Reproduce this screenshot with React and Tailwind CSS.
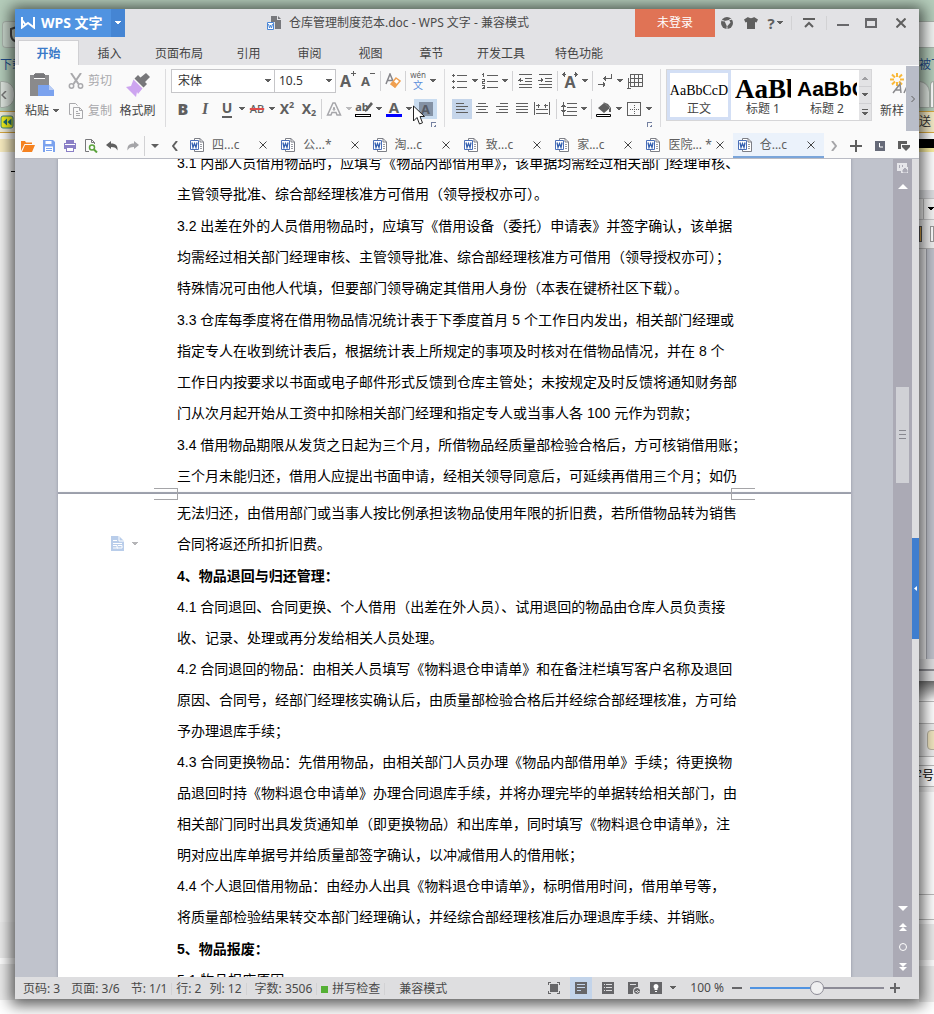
import { useState } from 'react';

const SHADOW = 'shadow-[0_2px_14px_4px_rgba(0,0,0,0.65)]';

// 文档选项卡
const docTabs = [
  { id: 1, title: '四...c' },
  { id: 2, title: '公...*' },
  { id: 3, title: '淘...c' },
  { id: 4, title: '致...c' },
  { id: 5, title: '家...c' },
  { id: 6, title: '医院... *' },
  { id: 7, title: '仓...c' },
];

const menus = ['开始', '插入', '页面布局', '引用', '审阅', '视图', '章节', '开发工具', '特色功能'];

// 正文内容，每一项为一段，段内按行排列
const pageOne = [
  [
    '3.1 内部人员借用物品时，应填写《物品内部借用单》，该单据均需经过相关部门经理审核、',
    '主管领导批准、综合部经理核准方可借用（领导授权亦可）。',
  ],
  [
    '3.2 出差在外的人员借用物品时，应填写《借用设备（委托）申请表》并签字确认，该单据',
    '均需经过相关部门经理审核、主管领导批准、综合部经理核准方可借用（领导授权亦可）；',
    '特殊情况可由他人代填，但要部门领导确定其借用人身份（本表在键桥社区下载）。',
  ],
  [
    '3.3 仓库每季度将在借用物品情况统计表于下季度首月 5 个工作日内发出，相关部门经理或',
    '指定专人在收到统计表后，根据统计表上所规定的事项及时核对在借物品情况，并在 8 个',
    '工作日内按要求以书面或电子邮件形式反馈到仓库主管处；未按规定及时反馈将通知财务部',
    '门从次月起开始从工资中扣除相关部门经理和指定专人或当事人各 100 元作为罚款；',
  ],
  [
    '3.4 借用物品期限从发货之日起为三个月，所借物品经质量部检验合格后，方可核销借用账；',
    '三个月未能归还，借用人应提出书面申请，经相关领导同意后，可延续再借用三个月；如仍',
  ],
];

const pageTwo = [
  {
    paragraphs: [
      [
        '无法归还，由借用部门或当事人按比例承担该物品使用年限的折旧费，若所借物品转为销售',
        '合同将返还所扣折旧费。',
      ],
    ],
  },
  {
    heading: '4、物品退回与归还管理：',
    paragraphs: [
      [
        '4.1 合同退回、合同更换、个人借用（出差在外人员）、试用退回的物品由仓库人员负责接',
        '收、记录、处理或再分发给相关人员处理。',
      ],
      [
        '4.2 合同退回的物品：由相关人员填写《物料退仓申请单》和在备注栏填写客户名称及退回',
        '原因、合同号，经部门经理核实确认后，由质量部检验合格后并经综合部经理核准，方可给',
        '予办理退库手续；',
      ],
      [
        '4.3 合同更换物品：先借用物品，由相关部门人员办理《物品内部借用单》手续；待更换物',
        '品退回时持《物料退仓申请单》办理合同退库手续，并将办理完毕的单据转给相关部门，由',
        '相关部门同时出具发货通知单（即更换物品）和出库单，同时填写《物料退仓申请单》，注',
        '明对应出库单据号并给质量部签字确认，以冲减借用人的借用帐；',
      ],
      [
        '4.4 个人退回借用物品：由经办人出具《物料退仓申请单》，标明借用时间，借用单号等，',
        '将质量部检验结果转交本部门经理确认，并经综合部经理核准后办理退库手续、并销账。',
      ],
    ],
  },
  {
    heading: '5、物品报废：',
    paragraphs: [['5.1 物品报废原因']],
  },
];

function Caret({ className = 'text-[#5f5f5f]' }) {
  return (
    <svg className={`w-1.5 h-1 shrink-0 ${className}`} viewBox="0 0 6 4" fill="currentColor" shapeRendering="crispEdges">
      <path d="M0 0h6v1H5v1H4v1H2V2H1V1H0z" />
    </svg>
  );
}

function Sep({ className = 'h-5' }) {
  return <span className={`w-px shrink-0 bg-[#d2d2d4] ${className}`} />;
}

// 功能区小图标按钮
function Tool({ label, className = 'w-4', children }) {
  return (
    <button type="button" aria-label={label} className={`h-5 shrink-0 flex items-center justify-center text-[#5f5f5f] ${className}`}>
      {children}
    </button>
  );
}

function Lines({ d }) {
  return (
    <svg className="w-4 h-4 shrink-0" viewBox="0 0 16 16" fill="none" stroke="currentColor" shapeRendering="crispEdges">
      <path d={d} />
    </svg>
  );
}

function DocIcon() {
  return (
    <svg className="w-3.5 h-3.5 shrink-0" viewBox="0 0 14 14" fill="none">
      <path d="M4.5 2V.5H10L13.500 4v9.500h-9V12" stroke="#7d7f86" fill="#fff" />
      <path d="M10 .5V4h3.500" stroke="#7d7f86" />
      <path d="M10 6.500h2M10 8.500h2M10 10.500h2" stroke="#9a9ca3" />
      <path d="M.5 2.500h8v9h-8z" fill="#fff" stroke="#4a6fb8" />
      <path d="M2 4.500l1 5 1.500-4 1.500 4 1-5" stroke="#3460b0" strokeWidth="1.300" />
    </svg>
  );
}

function LeftBackdrop() {
  return (
    <div className="overflow-hidden flex flex-col whitespace-nowrap text-xs" aria-hidden="true">
      <div className="h-[21px]" />
      <div className="h-[27px] ml-0.5 border border-r-0 border-[#a9b3ab] rounded-l-sm bg-[#c9d6cc] flex items-center pl-1.5">
        <svg className="w-5 h-5 shrink-0" viewBox="0 0 20 20" fill="none" stroke="#444" strokeWidth="2">
          <path d="M2 4l6-2 6 2v6c0 4-3 6-6 7-3-1-6-3-6-7z" />
        </svg>
      </div>
      <div className="h-[33px] flex items-center text-[#1f4e8c]">下载</div>
      <div className="h-[27px] border border-[#a9b3ab] rounded-r-xl bg-[#dfe6e0] flex items-center">
        <svg className="w-1.5 h-2" viewBox="0 0 6 8" fill="none" stroke="#777" strokeWidth="1.500"><path d="M5 0L1 4l4 4" /></svg>
      </div>
      <div className="h-[3px]" />
      <div className="h-[22px] border-y border-[#d9a93f] bg-[#f3f0dd] flex items-center">
        <svg className="w-3.5 h-3.5 shrink-0" viewBox="0 0 14 14">
          <rect x="1" y="1" width="12" height="12" rx="2" fill="#f4f31e" stroke="#3a8a8a" />
          <path d="M7 3.500v7L3 7zM11.500 3.500v7L7.500 7z" fill="#1c6e74" />
        </svg>
      </div>
      <div className="h-1.5 bg-white" />
      <div className="h-[13px] bg-[#fbefc3]" />
      <div className="h-[38px] bg-white flex items-center justify-end"><span className="w-1 h-px bg-black" /></div>
      <div className="h-[732px] bg-[#f1f1f1]" />
      <div className="h-9 bg-[#ececec]" />
      <div className="h-1.5 bg-white" />
      <div className="h-9 bg-[#ececec]" />
      <div className="flex-1 bg-white" />
    </div>
  );
}

function RightBackdrop() {
  return (
    <div className="overflow-hidden flex flex-col whitespace-nowrap text-xs" aria-hidden="true">
      <div className="h-[21px]" />
      <div className="h-[27px] border-y border-[#a9b3ab] bg-[#f2f5f3]" />
      <div className="h-[33px] flex items-center text-[#1f4e8c]">被下</div>
      <div className="h-[27px] flex">
        <span className="flex-1 rounded-tr-xl border border-[#a9b3ab] bg-[#dfe6e0]" />
        <span className="w-1 rounded-tl-xl border border-[#a9b3ab] bg-white" />
      </div>
      <div className="h-[3px]" />
      <div className="h-[22px] border-y border-[#d9a93f] bg-[#f6ecc8] flex items-center text-[#333]">送</div>
      <div className="h-1.5 bg-white" />
      <div className="h-[9px] bg-black" />
      <div className="h-1 bg-[#fbefa0]" />
      <div className="h-[38px] bg-white" />
      <div className="h-2 bg-[#dedfe2]" />
      <div className="h-[22px] border-y border-[#c9c9cb] bg-[#f6f6f6] flex items-center justify-end">
        <span className="h-full border-l border-[#bbb] pl-1 flex items-center"><Caret className="text-black" /></span>
      </div>
      <div className="h-[29px] bg-[#f1f1f1] border-b border-[#bbb] flex items-center gap-2">
        <span className="w-1 h-4 bg-[#e0a848] border border-[#555]" />
        <span className="w-2 h-4 bg-white border border-[#999]" />
      </div>
      <div className="h-[410px] flex">
        <span className="w-2 bg-[#e9e9eb] border-r border-[#9fa2aa]" />
        <span className="flex-1 bg-[#c0c3cc]" />
      </div>
      <div className="h-3 bg-[#dedee0] border-b-2 border-[#8b8b91]" />
      <div className="h-2.5 bg-[#dedee0]" />
      <div className="h-5 bg-linear-to-b from-[#6d6d6d] to-white" />
      <div className="h-[23px] bg-white border-y border-[#bbb]" />
      <div className="h-8 bg-[#eeeeee] flex items-center pl-2"><span className="w-4 h-5 shrink-0 rounded-sm border border-[#b8b3a2] bg-[#f1e6c0]" /></div>
      <div className="h-2.5 bg-white border-y border-[#bbb]" />
      <div className="h-5 bg-white flex items-center justify-end text-black">字号</div>
      <div className="h-1.5 bg-[#eee] border-t border-[#bbb]" />
      <div className="h-[102px] bg-white" />
      <div className="h-[26px] bg-white border-y border-[#bbb]" />
      <div className="h-1 bg-white" />
      <div className="h-9 bg-[#ececec]" />
      <div className="h-1.5 bg-white" />
      <div className="h-9 bg-[#ececec]" />
      <div className="flex-1 bg-white" />
    </div>
  );
}

function TitleBar() {
  return (
    <div className="h-7 flex shrink-0">
      <button type="button" className="w-24 bg-[#5093e1] text-white flex items-center gap-1.5 pl-1.5 text-sm font-bold">
        <svg className="w-3.5 h-3 shrink-0" viewBox="0 0 14 12" fill="none" stroke="#fff" strokeWidth="2">
          <path d="M1 0v10.500L7 6l6 4.500V0M1 3l3 4M13 3" />
        </svg>
        <span className="whitespace-nowrap">WPS 文字</span>
      </button>
      <button type="button" aria-label="应用菜单" className="w-3.5 bg-[#4585d3] text-white flex items-center justify-center">
        <Caret className="text-white" />
      </button>
      <div className="flex-1 flex items-center justify-center gap-2 pl-9 text-[#4a4a4a]">
        <svg className="w-3.5 h-3.5 shrink-0" viewBox="0 0 14 14" fill="none">
          <path d="M4 0h6v4h4v9H8V6H4z" fill="#77787c" />
          <path d="M11 0l3 3h-3z" fill="#77787c" />
          <path d="M.5 6.500h6v7h-6z" fill="#fff" stroke="#4a86d6" />
          <path d="M1.500 8l1 4 1-3 1 3 1-4" stroke="#4a86d6" />
        </svg>
        <h1 className="whitespace-nowrap">仓库管理制度范本.doc - WPS 文字 - 兼容模式</h1>
      </div>
      <button type="button" className="w-20 bg-[#e07355] text-white">未登录</button>
      <div className="flex items-center text-[#68686b]">
        <Tool label="云同步" className="w-6">
          <svg className="w-3 h-3" viewBox="0 0 12 12">
            <circle cx="6" cy="6" r="6" fill="currentColor" />
            <path d="M3.500 4L8 3l1.500 2.500L6 9.500z" fill="#e2e2e5" />
            <path d="M8 3l3-1M3.500 4L.5 3.500M6 9.500V12" stroke="#e2e2e5" />
          </svg>
        </Tool>
        <Tool label="皮肤" className="w-6">
          <svg className="w-3.5 h-3" viewBox="0 0 14 12" fill="currentColor">
            <path d="M4 0c1 1.500 5 1.500 6 0l4 2.500-1.500 3L11 5v7H3V5l-1.500.5L0 2.500z" />
          </svg>
        </Tool>
        <Tool label="帮助" className="w-6">
          <span className="text-[15px] font-bold pr-0.5">?</span>
          <Caret />
        </Tool>
        <Sep className="h-3.5 ml-1 bg-[#a5a5a8]" />
        <Tool label="隐藏功能区" className="w-[34px]">
          <svg className="w-3 h-2.5" viewBox="0 0 12 10" fill="none" stroke="currentColor" strokeWidth="2">
            <path d="M0 1h12M2 9l4-4 4 4" />
          </svg>
        </Tool>
        <Sep className="h-3.5 bg-[#a5a5a8]" />
        <Tool label="最小化" className="w-8"><span className="w-3 h-0.5 mt-1 bg-[#68686b]" /></Tool>
        <Tool label="最大化" className="w-6"><span className="w-3 h-2.5 border-2 border-t-3 border-[#68686b]" /></Tool>
        <Tool label="关闭" className="w-9">
          <svg className="w-2.5 h-2.5" viewBox="0 0 10 10" fill="none" stroke="currentColor" strokeWidth="2">
            <path d="M.5.5l9 9M9.500.5l-9 9" />
          </svg>
        </Tool>
      </div>
    </div>
  );
}

function MenuBar({ active, onSelect }) {
  return (
    <nav className="h-7 flex items-end pl-[3px] shrink-0">
      {menus.map((name) => (
        <button
          key={name}
          type="button"
          onClick={() => onSelect(name)}
          className={`h-[25px] pt-0.5 whitespace-nowrap ${name.length > 2 ? 'w-[78px]' : 'w-[61px]'} ${
            name === active ? 'bg-[#fafafa] border border-b-0 border-[#d0d0d3] text-[#3c7bc8] font-bold' : 'text-[#444]'
          }`}
        >
          {name}
        </button>
      ))}
    </nav>
  );
}

function Launcher() {
  return (
    <button type="button" aria-label="更多设置" className="absolute right-2 bottom-0 flex text-[#7480a0]">
      <svg className="w-[5px] h-[5px]" viewBox="0 0 5 5" fill="none" stroke="currentColor" shapeRendering="crispEdges">
        <path d="M.5 5V.5H5M3 4.500h1.500V3" />
      </svg>
    </button>
  );
}

function ClipboardGroup() {
  return (
    <div className="w-[151px] shrink-0 flex border-r border-[#dcdcde] my-1 mb-1.5 text-[#444]">
      <button type="button" className="w-[50px] pl-1 flex flex-col items-center justify-between pt-1 pb-2">
        <svg className="w-6 h-6" viewBox="0 0 24 24">
          <path d="M0 2h5V0h9v2h5v10H8v11H0z" fill="#8a8a8c" />
          <path d="M4 3h11v3H4z" fill="#fafafa" />
          <path d="M4 1h11v4H4z" fill="#77777a" />
          <path d="M8 12h11l5 5v6H8z" fill="#7ba2ee" />
          <path d="M19 12v5h5z" fill="#b9cdf6" />
        </svg>
        <span className="flex items-center gap-1 whitespace-nowrap leading-4">粘贴<Caret /></span>
      </button>
      <div className="flex flex-col justify-between pl-[3px] pt-1 pb-2 text-[#a9a9ac]">
        <button type="button" className="flex items-center gap-1 h-4 whitespace-nowrap">
          <svg className="w-4 h-4" viewBox="0 0 16 16" fill="none" stroke="currentColor" strokeWidth="1.500">
            <path d="M3 0l7.500 11M13 0L5.500 11" strokeWidth="2" />
            <circle cx="3.500" cy="13" r="2.200" />
            <circle cx="12.500" cy="13" r="2.200" />
          </svg>
          剪切
        </button>
        <button type="button" className="flex items-center gap-1 h-4 whitespace-nowrap">
          <svg className="w-4 h-4" viewBox="0 0 16 16" fill="none" stroke="currentColor">
            <path d="M3.500 11.500h-2v-11h6l2 2" />
            <path d="M5.500 4.500h6l3 3v8h-9zM11.500 4.500v3h3M8 8.500h2M8 10.500h4M8 12.500h4" />
          </svg>
          复制
        </button>
      </div>
      <button type="button" className="flex-1 flex flex-col items-center justify-between pt-1 pb-2 pr-0.5">
        <svg className="w-6 h-6" viewBox="0 0 24 24">
          <path d="M20 0l4 4-5 5 2 2-3.500 3.500-9-9L12 2l2.500 2.500z" fill="#77777a" />
          <path d="M7.500 6.500l9 9L12 21l-1-2-1 5L0 14l5-1z" fill="#cda5f0" />
        </svg>
        <span className="whitespace-nowrap leading-4">格式刷</span>
      </button>
    </div>
  );
}

function FontGroup() {
  return (
    <div className="relative w-[279px] shrink-0 border-r border-[#dcdcde] mt-1 mb-1.5 pl-[5px] flex flex-col gap-1.5">
      <div className="flex items-center gap-1 h-6">
        <div className="flex h-full">
          <div className="relative flex items-center">
            <select aria-label="字体" defaultValue="宋体" className="appearance-none w-[104px] h-6 border border-[#c6c6c9] bg-white pl-1.5 text-[#333]">
              <option>宋体</option>
              <option>黑体</option>
            </select>
            <span className="absolute right-1 pointer-events-none"><Caret /></span>
          </div>
          <div className="relative flex items-center">
            <select aria-label="字号" defaultValue="10.5" className="appearance-none w-[61px] h-6 border border-l-0 border-[#c6c6c9] bg-white pl-1 text-[#333]">
              <option>10.5</option>
              <option>12</option>
            </select>
            <span className="absolute right-1 pointer-events-none"><Caret /></span>
          </div>
        </div>
        <Tool label="增大字号">
          <b className="text-base leading-5">A</b>
          <svg className="w-[5px] h-[5px] shrink-0 self-start" viewBox="0 0 5 5" stroke="currentColor" shapeRendering="crispEdges"><path d="M2.500 0v5M0 2.500h5" /></svg>
        </Tool>
        <Tool label="减小字号">
          <b className="text-[13px] leading-5">A</b>
          <svg className="w-[5px] h-[5px] shrink-0 self-start" viewBox="0 0 5 5" stroke="currentColor" shapeRendering="crispEdges"><path d="M0 2.500h5" /></svg>
        </Tool>
        <Sep />
        <Tool label="清除格式">
          <svg className="w-4 h-4" viewBox="0 0 16 16" fill="none">
            <path d="M1 11L5 1l3 7M2.500 7.500H7" stroke="#85858a" strokeWidth="1.500" />
            <path d="M11 5l4 3-5 6-4-3z" fill="#fff" stroke="#f0a050" strokeWidth="1.500" />
            <path d="M8.500 8l4 3.500L10 15l-4-4z" fill="#f0a050" />
          </svg>
        </Tool>
        <Sep />
        <Tool label="拼音指南">
          <span className="flex flex-col items-center">
            <span className="text-[8px] leading-2">wén</span>
            <span className="text-[10px] leading-3 text-[#5a8fdc]">文</span>
          </span>
        </Tool>
        <Caret />
      </div>
      <div className="flex items-center gap-0.5 h-5 pl-0.5">
        <Tool label="加粗" className="w-5"><b className="text-base font-black">B</b></Tool>
        <Tool label="倾斜" className="w-5"><i className="text-base font-bold font-['Liberation_Serif',serif]">I</i></Tool>
        <Tool label="下划线" className="w-5"><span className="text-sm leading-4 font-bold border-b-2">U</span></Tool>
        <Caret />
        <Tool label="删除线" className="w-5"><span className="text-[11px] font-medium line-through decoration-[#e04b4b] decoration-2">AB</span></Tool>
        <Caret />
        <Tool label="上标" className="w-5"><b className="text-sm">X</b><b className="text-[9px] leading-3 self-start">2</b></Tool>
        <Tool label="下标" className="w-5"><b className="text-sm">X</b><b className="text-[9px] leading-3 self-end">2</b></Tool>
        <Sep className="h-5" />
        <Tool label="文字效果" className="w-5">
          <svg className="w-4 h-4" viewBox="0 0 16 16" fill="none">
            <path d="M1.500 14L7 2h2l5.500 12h-3.500l-1-2.500H6L5 14z" stroke="#a6a6aa" strokeWidth="1.500" />
            <path d="M7 9l1-3 1 3z" stroke="#a6a6aa" />
          </svg>
        </Tool>
        <Caret className="text-[#bbbbbd]" />
        <Tool label="突出显示" className="w-5">
          <span className="flex flex-col">
            <span className="flex h-3 items-center">
              <b className="text-[11px] leading-3">ab</b>
              <svg className="w-2 h-3 -ml-1" viewBox="0 0 8 12" fill="currentColor"><path d="M6 1l2 2-6 7-2 1 .5-3z" /></svg>
            </span>
            <span className="w-4 h-[3px] mt-px border border-black bg-white" />
          </span>
        </Tool>
        <Caret />
        <Tool label="字体颜色" className="w-5">
          <span className="flex flex-col items-center"><b className="text-[15px] leading-3">A</b><span className="w-4 h-[3px] mt-px bg-[#0000ff]" /></span>
        </Tool>
        <Caret />
        <Tool label="字符底纹" className="w-[23px] bg-[#c9dcf0]"><b className="w-3.5 h-3.5 text-[13px] leading-3.5 bg-[#8492a5] text-[#565b66]">A</b></Tool>
      </div>
      <Launcher />
      {/* 鼠标指针 */}
      <svg className="absolute left-[247px] top-[36px] w-3 h-5 pointer-events-none" viewBox="0 0 12 20">
        <path d="M.5 1v15l3.500-3.500L6.500 19l3-1.200L7 11.500h4.500z" fill="#fff" stroke="#222" />
      </svg>
    </div>
  );
}

function ParagraphGroup() {
  return (
    <div className="relative w-[216px] shrink-0 border-r border-[#dcdcde] mt-1 mb-1.5 pl-[7px] flex flex-col gap-1.5">
      <div className="flex items-center gap-1 h-6">
        <Tool label="项目符号"><Lines d="M5 2.500h10M5 8.500h10M5 14.500h10M0 2.500h3M0 8.500h3M0 14.500h3M1.500 1v3M1.500 7v3M1.500 13v3" /></Tool>
        <Caret />
        <Tool label="编号"><Lines d="M5 2.500h11M5 8.500h11M5 14.500h11M1.500 0v4M0 1.500h1M0 6.500h2.500v2H.5v1.500h2M0 12.500h2.500v3H0M1 14h1" /></Tool>
        <Caret />
        <Sep />
        <Tool label="减少缩进"><Lines d="M2 1.500h13M8 5.500h7M8 8.500h7M2 11.500h13M2 14.500h13M1 7h5M3.500 5v4M2.500 6v2" /></Tool>
        <Tool label="增加缩进"><Lines d="M2 1.500h13M8 5.500h7M8 8.500h7M2 11.500h13M2 14.500h13M1 7h5M4.500 5v4M5.500 6v2" /></Tool>
        <Sep />
        <Tool label="字符缩放">
          <span className="relative flex justify-center w-4">
            <b className="text-base leading-4 pt-0.5">A</b>
            <svg className="absolute inset-x-0 top-0 w-4 h-1.5" viewBox="0 0 16 6" fill="none" stroke="currentColor" shapeRendering="crispEdges">
              <path d="M0 2.500h4M12 2.500h4M1.500 1v3M2.500 0v5M14.500 1v3M13.500 0v5" />
            </svg>
          </span>
        </Tool>
        <Caret />
        <Sep />
        <Tool label="换行标记">
          <Lines d="M14.500 1v4H6M8.500 2.500v5M7.500 3.500v3M1 11.500h7M6.500 9v5M7.500 10v3" />
        </Tool>
        <Caret />
        <Tool label="插入表格"><Lines d="M3.500 1.500h12v12h-12zM7.500 1v13M11.500 1v13M3 5.500h13M3 9.500h13M1.500 5v10.500M1 9.500h3M0 15.500h4" /></Tool>
      </div>
      <div className="flex items-center h-5">
        <div className="flex">
          <Tool label="左对齐" className="w-5 bg-[#c5d5ea]"><Lines d="M2 2.500h8M2 5.500h12M2 8.500h9M2 11.500h12" /></Tool>
          <Tool label="居中" className="w-5"><Lines d="M4 2.500h8M2 5.500h12M4 8.500h8M2 11.500h12" /></Tool>
          <Tool label="右对齐" className="w-5"><Lines d="M6 2.500h8M2 5.500h12M5 8.500h9M2 11.500h12" /></Tool>
          <Tool label="两端对齐" className="w-5"><Lines d="M2 2.500h12M2 5.500h12M2 8.500h12M2 11.500h12" /></Tool>
          <Tool label="分散对齐" className="w-5"><Lines d="M.5 1v13M15.500 1v13M2 4.500h4M10 4.500h4M4.500 2.500v4M11.500 2.500v4M2 8.500h12M2 12.500h12" /></Tool>
        </div>
        <div className="flex items-center gap-1 pl-1">
          <Sep />
          <Tool label="行距"><Lines d="M6 2.500h10M6 6.500h10M6 10.500h10M2 14.500h14M2.500 2v12M1 4.500h3M1 10.500h3M2 1.500h1M0 5.500h5M0 9.500h5" /></Tool>
          <Caret />
          <Sep />
          <Tool label="底纹颜色">
            <svg className="w-4 h-4" viewBox="0 0 16 16">
              <path d="M7 1l6 5v5h2V7l-3-4zM2 7l6-5 6 5-6 5z" fill="currentColor" />
              <path d="M.5 13.500h14v2H.5z" fill="#fff" stroke="#000" />
            </svg>
          </Tool>
          <Caret />
          <Tool label="边框">
            <svg className="w-4 h-4" viewBox="0 0 16 16" fill="none" stroke="currentColor" shapeRendering="crispEdges">
              <path d="M1.500 1.500h13v13h-13z" />
              <path d="M8 4v9M4 8.500h9" strokeDasharray="1 1" />
            </svg>
          </Tool>
          <Caret />
        </div>
      </div>
      <Launcher />
    </div>
  );
}

function StyleGallery() {
  return (
    <div className="flex-1 min-w-0 flex mt-1 overflow-hidden">
      <div className="ml-[5px] h-[52px] shrink-0 flex border border-[#d6d6d8] bg-white">
        <button type="button" className="w-16 border-3 border-[#d3dff5] flex flex-col items-center">
          <span className="h-7 flex items-end leading-5 text-sm text-black font-['Liberation_Serif',serif]">AaBbCcD</span>
          <span className="leading-4 text-[#444]">正文</span>
        </button>
        <button type="button" className="w-16 pt-[3px] px-1 flex flex-col items-center">
          <span className="h-7 w-full leading-8 overflow-hidden text-left text-[27px] font-bold text-black font-['Liberation_Serif',serif]">AaBb</span>
          <span className="leading-4 text-[#444]">标题 1</span>
        </button>
        <button type="button" className="w-16 pt-[3px] px-0.5 flex flex-col items-center">
          <span className="h-7 w-full leading-8 overflow-hidden text-left text-[21px] font-bold text-black font-['Liberation_Sans',sans-serif]">AaBbC</span>
          <span className="leading-4 text-[#444]">标题 2</span>
        </button>
        <div className="w-3 bg-[#d0d0d3] flex flex-col gap-px">
          <button type="button" aria-label="上一行" className="flex-1 flex items-center justify-center bg-[#e3e3e5]"><span className="rotate-180 flex"><Caret className="text-[#a0a0a3]" /></span></button>
          <button type="button" aria-label="下一行" className="flex-1 flex items-center justify-center bg-[#e3e3e5]"><Caret /></button>
          <button type="button" aria-label="全部样式" className="flex-1 flex flex-col gap-0.5 items-center justify-center bg-[#e3e3e5]"><span className="w-1.5 h-px bg-[#5f5f5f]" /><Caret /></button>
        </div>
      </div>
      <button type="button" className="h-[52px] shrink-0 ml-2 flex flex-col items-start justify-between pt-1 pb-0.5 text-[#444]">
        <svg className="w-6 h-6 ml-2.5" viewBox="0 0 24 24" fill="none">
          <path d="M7 0v4M7 9v4M0 6.500h4M10 6.500h4M2 1.500l3 3M9 8.500l3 3M12 1.500l-3 3M5 8.500l-3 3" stroke="#f9b93a" strokeWidth="2" />
          <path d="M3 20l7-9 1 9M6 17h5M14 20l4-9M17 12l5 0" stroke="#8a8a8d" strokeWidth="1.500" />
        </svg>
        <span className="whitespace-nowrap leading-4">新样</span>
      </button>
    </div>
  );
}

function QuickBar({ active, onSelect }) {
  return (
    <div className="h-[26px] shrink-0 flex items-center border-b border-[#b9bbc4] pl-[3px] text-[#5f5f5f]">
      <div className="flex items-center gap-px shrink-0">
        <Tool label="打开" className="w-5">
          <svg className="w-3.5 h-3" viewBox="0 0 14 12" fill="#f58220"><path d="M0 11V1h4l1 1.500h6V4H3.500zM4 5h10l-3 7H1z" /></svg>
        </Tool>
        <Tool label="保存" className="w-5">
          <svg className="w-3 h-3" viewBox="0 0 12 12"><path d="M0 0h10l2 2v10H0z" fill="#7ba2ee" /><path d="M2.500 1h6v3h-6zM2 6.500h8V12H2z" fill="#fff" /><path d="M3 8h6v1H3zM3 10h6v1H3z" fill="#7ba2ee" /></svg>
        </Tool>
        <Tool label="打印" className="w-5">
          <svg className="w-3 h-3" viewBox="0 0 12 12"><path d="M2 0h8v3h2v6h-2v3H2V9H0V3h2z" fill="#8a7fc6" /><path d="M1 4h10v1H1zM3 8h6v3H3z" fill="#fff" /></svg>
        </Tool>
        <Tool label="打印预览" className="w-5">
          <svg className="w-3.5 h-3.5" viewBox="0 0 14 14" fill="none"><path d="M5 12.500H1.500v-12h6l3 3V5M7.500.5v3h3" stroke="#77777a" /><circle cx="8" cy="8.500" r="2.500" stroke="#5ba33c" strokeWidth="1.500" /><path d="M10 10.500l3 3" stroke="#5ba33c" strokeWidth="2" /></svg>
        </Tool>
        <Tool label="撤销" className="w-5">
          <svg className="w-3 h-2.5" viewBox="0 0 12 10" fill="currentColor"><path d="M0 4l5-4v2.500c5 0 7 2.500 6.500 7C10.500 7 8.500 6 5 6v2z" /></svg>
        </Tool>
        <Tool label="恢复" className="w-5">
          <svg className="w-3 h-2.5" viewBox="0 0 12 10" fill="#a5a5a8"><path d="M12 4L7 0v2.500C2 2.500 0 5 .5 9.500 1.500 7 3.500 6 7 6v2z" /></svg>
        </Tool>
        <Sep />
        <Tool label="自定义快速访问" className="w-[18px]">
          <svg className="w-2 h-1" viewBox="0 0 8 4" fill="currentColor"><path d="M0 0h8L4 4z" /></svg>
        </Tool>
        <Tool label="向左滚动" className="w-5">
          <svg className="w-1.5 h-2.5" viewBox="0 0 6 10" fill="none" stroke="currentColor" strokeWidth="2"><path d="M5 0L1 5l4 5" /></svg>
        </Tool>
      </div>
      <div className="flex-1 min-w-0 flex h-full">
        {docTabs.map((tab) => (
          <div
            key={tab.id}
            className={`flex-1 min-w-0 flex items-center pl-[5px] pr-[9px] border-b-2 ${
              tab.id === active ? 'bg-[#ebf2fb] border-[#7aa5da]' : 'border-transparent'
            }`}
          >
            <button type="button" onClick={() => onSelect(tab.id)} className="flex-1 min-w-0 flex items-center gap-2 whitespace-nowrap">
              <DocIcon />
              {tab.title}
            </button>
            <button type="button" aria-label={`关闭 ${tab.title}`} className="shrink-0">
              <svg className="w-2 h-2" viewBox="0 0 8 8" fill="none" stroke="#444"><path d="M.5.5l7 7M7.500.5l-7 7" /></svg>
            </button>
          </div>
        ))}
      </div>
      <div className="w-[95px] shrink-0 flex items-center">
        <Tool label="向右滚动" className="w-5">
          <svg className="w-1.5 h-2.5" viewBox="0 0 6 10" fill="none" stroke="#a5a5a8" strokeWidth="2"><path d="M1 0l4 5-4 5" /></svg>
        </Tool>
        <Tool label="新建标签" className="w-6">
          <svg className="w-3 h-3" viewBox="0 0 12 12" fill="none" stroke="currentColor" strokeWidth="2"><path d="M6 0v12M0 6h12" /></svg>
        </Tool>
        <Tool label="历史" className="w-6">
          <svg className="w-2.5 h-2.5" viewBox="0 0 10 10"><path d="M0 0h10v10H0z" fill="#666a78" /><path d="M4.500 2v4H8" fill="none" stroke="#fff" /></svg>
        </Tool>
        <Tool label="标签列表" className="w-6">
          <svg className="w-3 h-2.5" viewBox="0 0 12 10" fill="currentColor"><path d="M0 0h9v3H3v5H0zM4 4h8v2l-4 4-4-4z" /></svg>
        </Tool>
      </div>
    </div>
  );
}

function Paragraph({ lines }) {
  return (
    <p>
      {lines.map((line) => (
        <span key={line} className="block whitespace-nowrap">{line}</span>
      ))}
    </p>
  );
}

// 页边距裁剪标记
function CropMark({ side }) {
  return (
    <span
      className={`absolute -top-1.5 w-6 h-3 border-y border-[#a5a5a8] ${
        side === 'left' ? 'left-24 border-r' : 'right-24 border-l'
      }`}
    />
  );
}

function DocumentArea() {
  return (
    <div className="flex-1 min-h-0 flex bg-[#c0c3cc]">
      <main className="flex-1 min-w-0 pl-[43px] pr-[42px] overflow-hidden text-sm leading-[31px] text-black font-['Liberation_Sans','Noto_Sans_CJK_SC',sans-serif]">
        <div className="bg-white shadow-[0_0_3px_#8f92a0] pl-[119px] border-b-2 border-[#a3a6b1]">
          <div className="-mt-[11px] flex flex-col gap-px">
            {pageOne.map((lines) => <Paragraph key={lines[0]} lines={lines} />)}
          </div>
        </div>
        <div className="relative bg-white shadow-[0_0_3px_#8f92a0] pl-[119px] pt-1">
          <CropMark side="left" />
          <CropMark side="right" />
          <button type="button" aria-label="粘贴选项" className="absolute left-[53px] top-[42px] flex items-center gap-2">
            <svg className="w-[13px] h-[15px]" viewBox="0 0 13 15">
              <path d="M0 0h8l5 5v10H0z" fill="#b9cdea" />
              <path d="M8 0v5h5M2 4.500h4M2 7.500h9M2 9.500h4v2.500h1M7 9.500h4v2.500H2" fill="none" stroke="#fff" />
            </svg>
            <Caret className="text-[#b5b5b8]" />
          </button>
          <div className="flex flex-col gap-px">
            {pageTwo.map((section, i) => (
              <section key={i}>
                {section.heading && <h2 className="font-bold">{section.heading}</h2>}
                {section.paragraphs.map((lines) => <Paragraph key={lines[0]} lines={lines} />)}
              </section>
            ))}
          </div>
        </div>
      </main>
      <div className="w-[19px] shrink-0 bg-[#abaab5] flex flex-col items-center text-white">
        <button type="button" aria-label="选项卡" className="mt-1">
          <svg className="w-[11px] h-2.5" viewBox="0 0 11 10"><path d="M0 0h10v4h1v6H4V8H0z" fill="#e6e6ea" /><path d="M2.500 2v3M5.500 2v2M6 9V7l2-2 2 2v2z" fill="#abaab5" stroke="#abaab5" /></svg>
        </button>
        <button type="button" aria-label="向上滚动" className="mt-[11px]">
          <svg className="w-2.5 h-[5px]" viewBox="0 0 10 5" fill="currentColor"><path d="M5 0l5 5H0z" /></svg>
        </button>
        <div className="flex-[198] min-h-0" />
        <div className="flex-[96] w-[13px] bg-[#d0d1d6] flex flex-col gap-[3px] items-center justify-center">
          <span className="w-[7px] h-px bg-[#88888f]" />
          <span className="w-[7px] h-px bg-[#88888f]" />
          <span className="w-[7px] h-px bg-[#88888f]" />
        </div>
        <div className="flex-[424] min-h-0" />
        <div className="flex flex-col items-center gap-3 pb-1.5">
          <button type="button" aria-label="向下滚动"><svg className="w-2.5 h-[5px]" viewBox="0 0 10 5" fill="currentColor"><path d="M0 0h10L5 5z" /></svg></button>
          <button type="button" aria-label="上一页"><svg className="w-2 h-2" viewBox="0 0 8 8" fill="currentColor"><path d="M4 0l4 4H0zM4 4l4 4H0z" /></svg></button>
          <button type="button" aria-label="选择浏览对象" className="w-2 h-2 rounded-full border border-white" />
          <button type="button" aria-label="下一页"><svg className="w-2 h-2" viewBox="0 0 8 8" fill="currentColor"><path d="M0 0h8L4 4zM0 4h8L4 8z" /></svg></button>
        </div>
      </div>
      <div className="w-[7px] shrink-0 bg-[#dedee0] flex flex-col">
        <div className="flex-[379]" />
        <button type="button" aria-label="展开任务窗格" className="h-[101px] bg-[#3f7ecf] flex items-center justify-center">
          <svg className="w-[3px] h-[5px]" viewBox="0 0 3 5" fill="#fff"><path d="M3 0v5L0 2.500z" /></svg>
        </button>
        <div className="flex-[338]" />
      </div>
    </div>
  );
}

function ViewButton({ label, active, d }) {
  return (
    <button type="button" aria-label={label} className={`h-full flex items-center justify-center ${active ? 'w-[22px] bg-[#c3d4ea]' : 'w-5'}`}>
      <svg className="w-3 h-3" viewBox="0 0 12 12" fill="#666669" fillRule="evenodd"><path d={d} /></svg>
    </button>
  );
}

function StatusBar() {
  const [zoom, setZoom] = useState(50);

  return (
    <footer className="h-[22px] shrink-0 bg-[#dedee0] flex items-center whitespace-nowrap text-[#4a4a4a] pl-2">
      <div className="flex items-center h-full pt-0.5">
        <div className="flex items-center gap-[11px]">
          <span>页码: 3</span>
          <span>页面: 3/6</span>
          <span>节: 1/1</span>
        </div>
        <Sep className="h-3 mx-1 bg-[#a5a5a8]" />
        <span>行: 2</span>
        <span className="ml-2">列: 12</span>
        <Sep className="h-3 ml-1 mr-2 bg-[#a5a5a8]" />
        <span>字数: 3506</span>
        <Sep className="h-3 mx-1 bg-[#a5a5a8]" />
        <span className="w-[7px] h-[7px] mr-1 bg-[#55b035]" />
        <button type="button">拼写检查</button>
        <Sep className="h-3 ml-1 bg-[#a5a5a8]" />
        <span className="ml-3.5">兼容模式</span>
      </div>
      <div className="ml-auto h-full flex items-center pr-[19px]">
        <div className="h-full flex items-center gap-1.5">
          <ViewButton label="全屏显示" d="M0 0h3v1H1v2H0zM9 0h3v3h-1V1H9zM0 9h1v2h2v1H0zM11 9h1v3H9v-1h2zM2 2h8v8H2z" />
          <ViewButton label="页面视图" active d="M0 0h12v12H0zM2 2v1h8V2zM2 5v1h8V5zM2 8v1h4V8z" />
          <ViewButton label="大纲视图" d="M0 0h12v12H0zM2 2v1h1V2zM4 2v1h6V2zM2 5v1h1V5zM4 5v1h6V5zM2 8v1h1V8zM4 8v1h6V8z" />
          <ViewButton label="Web版式" d="M0 0h10v5H9C5 5 5 8 5 12H0zM2 2v1h6V2zM9 6a3 3 0 1 0 .1 0zM9 8v3h.8V8zM7.500 9v1h4V9z" />
        </div>
        <button type="button" aria-label="护眼模式" className="ml-1.5 flex items-center gap-2">
          <svg className="w-3 h-3" viewBox="0 0 12 12"><path d="M0 0h12v12H0z" fill="#666669" /><path d="M6 2a2.500 2.500 0 0 1 1.500 4.500V8h-3V6.500A2.500 2.500 0 0 1 6 2zM5 9h2v1H5z" fill="#fff" /></svg>
          <Caret />
        </button>
        <label htmlFor="zoom" className="ml-3.5">100 %</label>
        <button type="button" aria-label="缩小" className="ml-2 w-2.5 h-0.5 bg-[#666669]" />
        <input
          id="zoom"
          type="range"
          min="0"
          max="100"
          value={zoom}
          onChange={(e) => setZoom(Number(e.target.value))}
          className="ml-2 w-[134px] h-3.5 appearance-none bg-transparent [&::-webkit-slider-runnable-track]:h-0.5 [&::-webkit-slider-runnable-track]:bg-linear-to-r [&::-webkit-slider-runnable-track]:from-[#5093e1] [&::-webkit-slider-runnable-track]:from-50% [&::-webkit-slider-runnable-track]:to-[#8c8b96] [&::-webkit-slider-runnable-track]:to-50% [&::-webkit-slider-thumb]:appearance-none [&::-webkit-slider-thumb]:size-3.5 [&::-webkit-slider-thumb]:-mt-1.5 [&::-webkit-slider-thumb]:rounded-full [&::-webkit-slider-thumb]:border [&::-webkit-slider-thumb]:border-[#8c8b96] [&::-webkit-slider-thumb]:bg-[#f0f0f1]"
        />
        <button type="button" aria-label="放大" className="ml-1.5">
          <svg className="w-2.5 h-2.5" viewBox="0 0 10 10" fill="none" stroke="#666669" strokeWidth="2"><path d="M5 0v10M0 5h10" /></svg>
        </button>
      </div>
    </footer>
  );
}

export default function App() {
  const [menu, setMenu] = useState('开始');
  const [tab, setTab] = useState(7);

  return (
    <div className="h-screen overflow-hidden grid grid-cols-[15px_minmax(0,1fr)_15px] grid-rows-[minmax(0,1fr)] bg-linear-to-b from-[#b5cdbb] from-20% to-white to-20% text-xs font-['Noto_Sans','Noto_Sans_CJK_SC',sans-serif]">
      <LeftBackdrop />
      <div className={`relative z-10 mt-[9px] mb-[15px] flex flex-col bg-[#e2e2e5] ${SHADOW}`}>
        <TitleBar />
        <MenuBar active={menu} onSelect={setMenu} />
        <div className="h-[68px] shrink-0 flex bg-[#fafafa]">
          <ClipboardGroup />
          <FontGroup />
          <ParagraphGroup />
          <StyleGallery />
          <button type="button" aria-label="展开功能区" className="w-[13px] shrink-0 mt-px mb-0.5 bg-[#b9bdc8] text-[#5f5f5f] flex items-center justify-center">
            <svg className="w-1 h-1.5" viewBox="0 0 4 6" fill="none" stroke="currentColor"><path d="M.5 0l3 3-3 3" /></svg>
          </button>
        </div>
        <div className="bg-[#fafafa]">
          <QuickBar active={tab} onSelect={setTab} />
        </div>
        <DocumentArea />
        <StatusBar />
      </div>
      <RightBackdrop />
    </div>
  );
}
